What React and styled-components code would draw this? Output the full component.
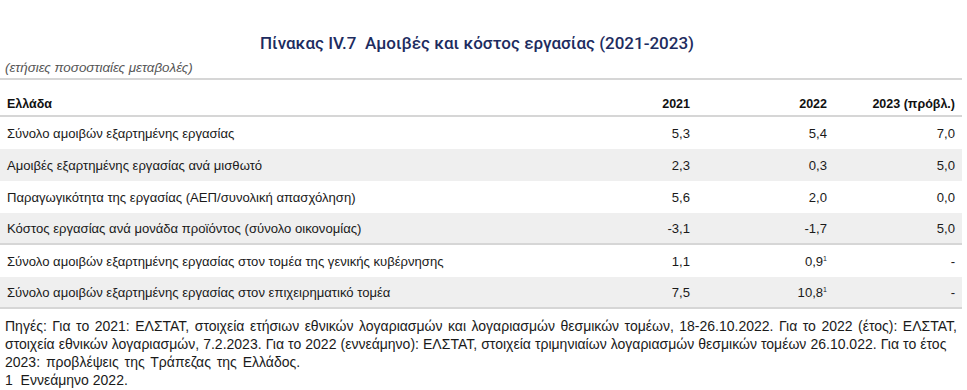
import styled, { createGlobalStyle } from "styled-components";

const rows = [
	{ label: "Σύνολο αμοιβών εξαρτημένης εργασίας", v: ["5,3", "5,4", "7,0"] },
	{ label: "Αμοιβές εξαρτημένης εργασίας ανά μισθωτό", v: ["2,3", "0,3", "5,0"] },
	{ label: "Παραγωγικότητα της εργασίας (ΑΕΠ/συνολική απασχόληση)", v: ["5,6", "2,0", "0,0"] },
	{ label: "Κόστος εργασίας ανά μονάδα προϊόντος (σύνολο οικονομίας)", v: ["-3,1", "-1,7", "5,0"], divider: true },
	{ label: "Σύνολο αμοιβών εξαρτημένης εργασίας στον τομέα της γενικής κυβέρνησης", v: ["1,1", "0,9", "-"], note: [false, true, false] },
	{ label: "Σύνολο αμοιβών εξαρτημένης εργασίας στον επιχειρηματικό τομέα", v: ["7,5", "10,8", "-"], note: [false, true, false] },
];

const notes = [
	{ text: "Πηγές: Για το 2021: ΕΛΣΤΑΤ, στοιχεία ετήσιων εθνικών λογαριασμών και λογαριασμών θεσμικών τομέων, 18-26.10.2022. Για το 2022 (έτος): ΕΛΣΤΑΤ,", spread: 1.6 },
	{ text: "στοιχεία εθνικών λογαριασμών, 7.2.2023. Για το 2022 (εννεάμηνο): ΕΛΣΤΑΤ, στοιχεία τριμηνιαίων λογαριασμών θεσμικών τομέων 26.10.022. Για το έτος", spread: 0.2 },
	{ text: "2023: προβλέψεις της Τράπεζας της Ελλάδος.", spread: 2 },
	{ text: "1\u00a0\u00a0Εννεάμηνο 2022.", spread: 0 },
];

export default function App() {
	return (
		<>
			<GlobalStyle />
			<Page>
				<Title>Πίνακας IV.7&nbsp;&nbsp;Αμοιβές και κόστος εργασίας (2021-2023)</Title>
				<Subtitle>(ετήσιες ποσοστιαίες μεταβολές)</Subtitle>

				<Table>
					<HeadRow>
						<Label>Ελλάδα</Label>
						<Num>2021</Num>
						<Num>2022</Num>
						<Num>2023 (πρόβλ.)</Num>
					</HeadRow>
					{rows.map((row, i) => (
						<Row key={i} $shaded={i % 2 === 1} $divider={row.divider}>
							<Label>{row.label}</Label>
							{row.v.map((val, j) => (
								<Num key={j}>
									{val}
									{row.note && row.note[j] && <Sup>1</Sup>}
								</Num>
							))}
						</Row>
					))}
				</Table>

				<Notes>
					{notes.map((n, i) => (
						<NoteLine key={i} $spread={n.spread}>
							{n.text}
						</NoteLine>
					))}
				</Notes>
			</Page>
		</>
	);
}

const GlobalStyle = createGlobalStyle`
	body {
		margin: 0;
		background: #ffffff;
		font-family: "Liberation Sans", Arial, sans-serif;
		color: #1a1a1a;
	}
`;

const Page = styled.div`
	width: 967px;
	padding-top: 33px;
`;

const Title = styled.h1`
	margin: 0 0 0 260px;
	font-family: "Roboto", "Liberation Sans", sans-serif;
	font-weight: 500;
	font-size: 17px;
	line-height: 20px;
	color: #1d2c60;
	white-space: nowrap;
`;

const Subtitle = styled.div`
	margin: 7px 0 0 5px;
	font-size: 13.4px;
	line-height: 16px;
	font-style: italic;
	color: #555555;
`;

const Table = styled.div`
	width: 962px;
	margin-top: 2px;
	border-top: 2px solid #d6d6d6;
`;

const HeadRow = styled.div`
	display: grid;
	grid-template-columns: 1fr 140px 137px 135px;
	align-items: end;
	height: 37px;
	padding-bottom: 4px;
	box-sizing: border-box;
	border-bottom: 2px solid #d6d6d6;
	font-weight: 700;
	font-size: 12.5px;
	color: #111111;
`;

const Row = styled.div`
	display: grid;
	grid-template-columns: 1fr 140px 137px 135px;
	align-items: center;
	height: 32px;
	box-sizing: border-box;
	background: ${(p) => (p.$shaded ? "#efefef" : "#ffffff")};
	border-bottom: ${(p) => (p.$divider ? "2px solid #d6d6d6" : "0")};
	font-size: 13.1px;
	color: #1a1a1a;

	&:last-child {
		border-bottom: 2px solid #d6d6d6;
	}
`;

const Label = styled.div`
	padding-left: 7px;
	white-space: nowrap;
`;

const Num = styled.div`
	text-align: right;
	&:last-child {
		padding-right: 7px;
	}
`;

const Sup = styled.sup`
	font-size: 7px;
	vertical-align: 5px;
	line-height: 0;
`;

const Notes = styled.div`
	margin: 8px 0 0 5px;
	font-size: 14px;
	line-height: 18px;
	color: #1a1a1a;
`;

const NoteLine = styled.div`
	white-space: nowrap;
	word-spacing: ${(p) => p.$spread}px;
`;
